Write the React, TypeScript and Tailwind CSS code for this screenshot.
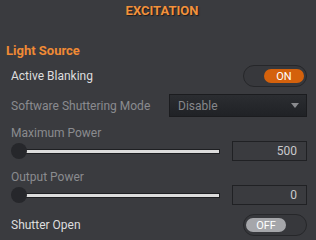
import React from "react";

function Toggle({ on }: { on: boolean }) {
  return (
    <div className="flex h-[22px] w-[64px] items-center rounded-full border border-[#26272a] bg-[#37383c] px-[2px]">
      {on ? (
        <div className="ml-auto flex h-[14px] w-[40px] items-center justify-center rounded-full bg-[#d4610c] text-[11px] leading-none text-white">
          ON
        </div>
      ) : (
        <div className="flex h-[14px] w-[40px] items-center justify-center rounded-full bg-[#a5a6aa] text-[11px] leading-none text-white">
          OFF
        </div>
      )}
    </div>
  );
}

function SliderRow({ value }: { value: string }) {
  return (
    <div className="flex h-[20px] items-center">
      <div className="relative flex h-[16px] w-[209px] items-center">
        <div className="ml-[12px] h-[5px] flex-1 border border-[#1e1f22] bg-[#dcdcdc]" />
        <div className="absolute left-0 top-0 h-[16px] w-[16px] rounded-full bg-[#26272b]" />
      </div>
      <div className="ml-auto flex h-[20px] w-[75px] items-center justify-end border border-[#202124] pr-[9px] text-[12px] text-[#c9c9cc]">
        {value}
      </div>
    </div>
  );
}

export default function App() {
  return (
    <div className="h-[240px] w-[316px] overflow-hidden bg-[#3a3b3f] font-['Roboto',sans-serif]">
      <div className="flex h-[21px] items-center justify-center pl-[8px] text-[13px] font-bold text-[#f2913c] [text-shadow:1px_1px_1px_#1a1a1a]">
        EXCITATION
      </div>
      <div className="mt-[22px] flex h-[16px] items-center pl-[6px] text-[13px] font-bold text-[#f08a35]">
        Light Source
      </div>
      <div className="pl-[11px] pr-[9px]">
        <div className="mt-[6px] flex h-[22px] items-center justify-between">
          <span className="text-[12px] text-[#dedede]">Active Blanking</span>
          <Toggle on />
        </div>
        <div className="mt-[7px] flex h-[23px] items-center justify-between">
          <span className="text-[12px] text-[#8a8b8f]">Software Shuttering Mode</span>
          <div className="flex h-[23px] w-[138px] items-center justify-between border border-[#1b1c1f] bg-gradient-to-b from-[#2b2d31] to-[#202226] pl-[8px] pr-[7px] text-[12px] text-[#86878b]">
            <span>Disable</span>
            <svg width="8" height="5" viewBox="0 0 8 5">
              <path d="M0 0H8L4 5Z" fill="#8a8b8f" />
            </svg>
          </div>
        </div>
        <div className="mt-[8px] flex h-[16px] items-center text-[12px] text-[#8a8b8f]">
          Maximum Power
        </div>
        <SliderRow value="500" />
        <div className="mt-[8px] flex h-[16px] items-center text-[12px] text-[#8a8b8f]">
          Output Power
        </div>
        <SliderRow value="0" />
        <div className="mt-[9px] flex h-[22px] items-center justify-between">
          <span className="text-[12px] text-[#dedede]">Shutter Open</span>
          <Toggle on={false} />
        </div>
      </div>
    </div>
  );
}
